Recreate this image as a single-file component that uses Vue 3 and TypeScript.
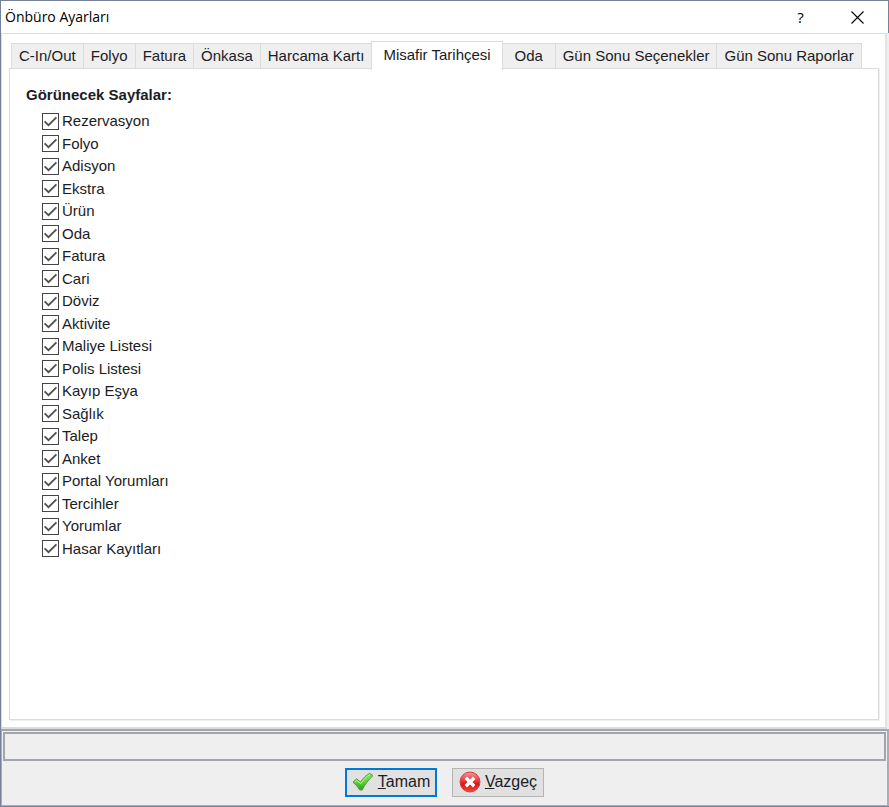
<script setup lang="ts">
import { ref } from 'vue'

interface PageOption {
  id: string
  label: string
  visible: boolean
}

const tabs: string[] = [
  'C-In/Out',
  'Folyo',
  'Fatura',
  'Önkasa',
  'Harcama Kartı',
  'Misafir Tarihçesi',
  'Oda',
  'Gün Sonu Seçenekler',
  'Gün Sonu Raporlar',
]
const activeTab = ref('Misafir Tarihçesi')

const pages = ref<PageOption[]>(
  [
    'Rezervasyon',
    'Folyo',
    'Adisyon',
    'Ekstra',
    'Ürün',
    'Oda',
    'Fatura',
    'Cari',
    'Döviz',
    'Aktivite',
    'Maliye Listesi',
    'Polis Listesi',
    'Kayıp Eşya',
    'Sağlık',
    'Talep',
    'Anket',
    'Portal Yorumları',
    'Tercihler',
    'Yorumlar',
    'Hasar Kayıtları',
  ].map((label, index) => ({ id: `page-${index}`, label, visible: true })),
)
</script>

<template>
  <div class="window">
    <header class="titlebar">
      <h1 class="title">Önbüro Ayarları</h1>
      <button class="title-button" type="button">?</button>
      <button class="title-button close" type="button">
        <svg width="13" height="13" viewBox="0 0 13 13" aria-hidden="true">
          <path d="M0.5 0.5 12.5 12.5M12.5 0.5 0.5 12.5" stroke="#000" stroke-width="1.1" fill="none" />
        </svg>
      </button>
    </header>

    <main class="content">
      <nav class="tabs" role="tablist">
        <button
          v-for="tab in tabs"
          :key="tab"
          class="tab"
          :class="{ active: tab === activeTab }"
          type="button"
          role="tab"
          :aria-selected="tab === activeTab"
          @click="activeTab = tab"
        >
          {{ tab }}
        </button>
      </nav>
      <section class="panel" role="tabpanel">
        <h2 class="heading">Görünecek Sayfalar:</h2>
        <ul class="options">
          <li v-for="page in pages" :key="page.id" class="row">
            <label class="option" :for="page.id">
              <span class="box">
                <input :id="page.id" v-model="page.visible" type="checkbox" />
                <svg v-if="page.visible" width="17" height="17" viewBox="0 0 17 17" aria-hidden="true">
                  <path d="M2.6 8.4 6.5 12.2 14.4 4.4" stroke="#505050" stroke-width="1.8" fill="none" />
                </svg>
              </span>
              <span>{{ page.label }}</span>
            </label>
          </li>
        </ul>
      </section>
    </main>

    <footer class="footer">
      <div class="status"></div>
      <div class="actions">
        <button class="action primary" type="button">
          <svg width="22" height="20" viewBox="0 0 22 20" aria-hidden="true">
            <defs>
              <linearGradient id="tick" x1="0" y1="0" x2="0" y2="1">
                <stop offset="0" stop-color="#8fe36c" />
                <stop offset="0.5" stop-color="#62d13c" />
                <stop offset="1" stop-color="#2fa01a" />
              </linearGradient>
            </defs>
            <path
              d="M1 10.2 4.6 6.8 8.5 10C11.2 6 14.4 3 17.6 1.4L21 3.6C16.6 7.6 13 12.2 10.2 18L7.6 18C6 15 3.8 12.6 1 10.2Z"
              fill="url(#tick)"
              stroke="#48a035"
              stroke-width="1"
              stroke-linejoin="round"
            />
            <path d="M2.8 10 4.7 8.2 8.7 11.6C11.5 7.6 14.6 4.4 17.8 2.6" fill="none" stroke="#c4f3ae" stroke-width="1" />
          </svg>
          <span><u>T</u>amam</span>
        </button>
        <button class="action" type="button">
          <svg width="22" height="22" viewBox="0 0 22 22" aria-hidden="true">
            <defs>
              <linearGradient id="disc" x1="0" y1="0" x2="0" y2="1">
                <stop offset="0" stop-color="#f39a95" />
                <stop offset="0.4" stop-color="#e84444" />
                <stop offset="0.6" stop-color="#dc1414" />
                <stop offset="1" stop-color="#f04a40" />
              </linearGradient>
            </defs>
            <circle cx="11" cy="11" r="10" fill="url(#disc)" stroke="#d84040" stroke-width="1" />
            <path d="M8 8 14 14M14 8 8 14" stroke="#fff" stroke-width="3.4" stroke-linecap="square" />
          </svg>
          <span><u>V</u>azgeç</span>
        </button>
      </div>
    </footer>
  </div>
</template>

<style>
body {
  background: #fff;
}
</style>

<style scoped>
.window {
  box-sizing: border-box;
  min-height: 100vh;
  display: flex;
  flex-direction: column;
  border: 1px solid #76829a;
  border-right: 0;
  background: #efefef;
  color: #1c1c24;
  font: 15px/20px "Liberation Sans", Arial, sans-serif;
}

button {
  font: inherit;
  color: inherit;
}

.titlebar {
  display: flex;
  align-items: center;
  height: 32px;
  padding: 0 2px 0 4px;
  border-right: 1px solid #76829a;
  background: #fff;
  color: #000;
  font-family: "Open Sans", "Noto Sans", sans-serif;
}

.title {
  flex: 1;
  margin: 0;
  font-size: 14px;
  font-weight: 400;
}

.title-button {
  display: flex;
  align-items: center;
  justify-content: center;
  width: 57px;
  height: 32px;
  padding: 0;
  border: 0;
  background: none;
}

.content {
  flex: 1;
  display: flex;
  flex-direction: column;
  margin-right: 2px;
  padding: 7px 6px 7px 7px;
  border: 1px solid #dcdcdc;
  border-right: 2px solid #e2e2e2;
  border-bottom: 2px solid #dcdcdc;
  background: #fff;
}

.tabs {
  display: flex;
  align-items: flex-end;
  padding-left: 2px;
}

.tab {
  min-width: 52px;
  height: 26px;
  padding: 0 7px;
  border: 1px solid #dcdcdc;
  border-right-width: 0;
  background: #efefef;
  white-space: nowrap;
}

.tab:last-child {
  border-right-width: 1px;
}

.tab.active {
  height: 29px;
  margin-bottom: -1px;
  padding: 0 11px 3px;
  border-right-width: 1px;
  border-bottom: 0;
  background: #fff;
  z-index: 1;
}

.tab.active + .tab {
  border-left-width: 0;
}

.panel {
  flex: 1;
  margin-top: -1px;
  padding: 16px;
  border: 1px solid #dcdcdc;
  box-shadow: 1px 1px 0 #efefef;
}

.heading {
  margin: 0;
  font-size: 15px;
  font-weight: 700;
}

.options {
  display: grid;
  grid-template-rows: repeat(20, 1fr);
  height: 450px;
  margin: 5px 0 0 16px;
  padding: 0;
  list-style: none;
}

.row {
  display: flex;
  align-items: center;
}

.option {
  display: flex;
  align-items: center;
  gap: 3px;
}

.box {
  display: grid;
  width: 17px;
  height: 17px;
}

.box > * {
  grid-area: 1 / 1;
}

.box input {
  appearance: none;
  box-sizing: border-box;
  width: 17px;
  height: 17px;
  margin: 0;
  border: 1px solid #444;
  background: #fff;
}

.box svg {
  pointer-events: none;
}

.footer {
  padding: 1px;
  border: 1px solid #a9adb5;
  border-top: 2px solid #a3a7ab;
  border-right-width: 2px;
}

.status {
  height: 25px;
  border: 2px solid #a2a5b0;
}

.actions {
  display: flex;
  justify-content: center;
  gap: 15px;
  padding: 7px 0;
}

.action {
  display: flex;
  align-items: center;
  justify-content: center;
  gap: 4px;
  box-sizing: border-box;
  min-width: 92px;
  height: 29px;
  padding: 0 4px 1px;
  border: 1px solid #b4b4b4;
  background: #e1e1e1;
  font-size: 16px;
}

.action.primary {
  border: 2px solid #0078d7;
}
</style>
